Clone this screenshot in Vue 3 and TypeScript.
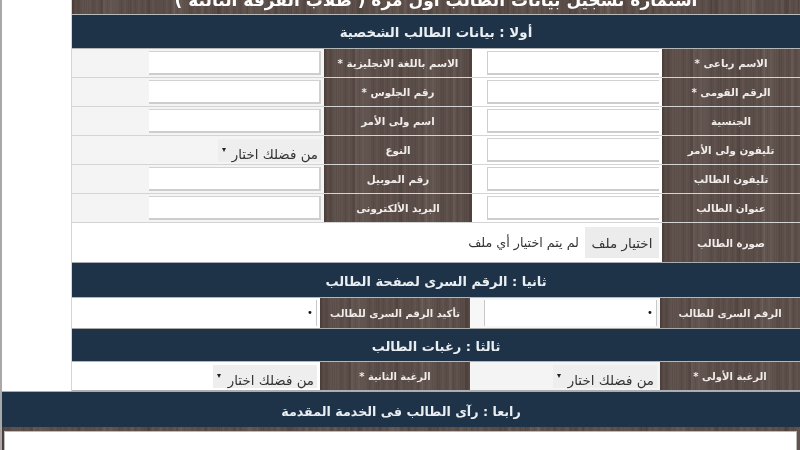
<script setup lang="ts">
interface Field { label: string; kind?: 'select' }
const rows: Field[][] = [
  [{ label: 'الاسم رباعى *' }, { label: 'الاسم باللغة الانجليزية *' }],
  [{ label: 'الرقم القومى *' }, { label: 'رقم الجلوس *' }],
  [{ label: 'الجنسية' }, { label: 'اسم ولى الأمر' }],
  [{ label: 'تليفون ولى الأمر' }, { label: 'النوع', kind: 'select' }],
  [{ label: 'تليفون الطالب' }, { label: 'رقم الموبيل' }],
  [{ label: 'عنوان الطالب' }, { label: 'البريد الألكترونى' }],
]
const placeholder = 'من فضلك اختار'
</script>

<template>
  <div class="page" dir="rtl">
    <div class="form">
      <div class="title wood"><span>استمارة تسجيل بيانات الطالب أول مرة ( طلاب الفرقة الثالثة )</span></div>

      <div class="band first">أولا : بيانات الطالب الشخصية</div>
      <div v-for="(row, i) in rows" :key="i" class="row personal">
        <template v-for="(f, j) in row" :key="j">
          <div class="label wood">{{ f.label }}</div>
          <div class="cell" :class="j === 1 ? 'grey' : ''">
            <div v-if="f.kind === 'select'" class="select">{{ placeholder }}<i class="arrow"></i></div>
            <div v-else class="input" :class="j === 1 ? 'edge-right' : 'edge-left'"></div>
          </div>
        </template>
      </div>
      <div class="row photo">
        <div class="label wood">صورة الطالب</div>
        <div class="file">
          <div class="file-btn">اختيار ملف</div>
          <span class="file-text">لم يتم اختيار أي ملف</span>
        </div>
      </div>

      <div class="band second">ثانيا : الرقم السرى لصفحة الطالب</div>
      <div class="row pair pass">
        <div class="label wood">الرقم السرى للطالب</div>
        <div class="cell narrow soft"><div class="pass-input">•</div></div>
        <div class="label wood">تأكيد الرقم السرى للطالب</div>
        <div class="cell"><div class="pass-input">•</div></div>
      </div>

      <div class="band third">ثالثا : رغبات الطالب</div>
      <div class="row pair wish">
        <div class="label wood">الرغبة الأولى *</div>
        <div class="cell grey narrow"><div class="select wide">{{ placeholder }}<i class="arrow"></i></div></div>
        <div class="label wood">الرغبة الثانية *</div>
        <div class="cell"><div class="select wide">{{ placeholder }}<i class="arrow"></i></div></div>
      </div>
    </div>

    <div class="band fourth">رابعا : رآى الطالب فى الخدمة المقدمة</div>
    <div class="opinion wood">
      <div class="textarea"></div>
    </div>
  </div>
</template>

<style scoped>
.page {
  position: relative;
  width: 800px;
  height: 450px;
  overflow: hidden;
  box-sizing: border-box;
  border-left: 2px solid #a9a9a9;
  background: #fff;
  font-family: "DejaVu Sans", "Liberation Sans", sans-serif;
  display: flex;
  flex-direction: column;
  filter: blur(0.5px);
}
.form {
  margin-left: 69px;
  border-left: 1px solid #d6d6d6;
}
.wood {
  background-color: #5b4d48;
  background-image:
    repeating-linear-gradient(90deg, rgba(30, 20, 18, 0.08) 0 1px, transparent 1px 3px, rgba(255, 255, 255, 0.03) 3px 5px, transparent 5px 7px),
    repeating-linear-gradient(90deg, rgba(25, 15, 12, 0.1) 0 2px, transparent 2px 13px, rgba(255, 255, 255, 0.04) 13px 16px, transparent 16px 29px),
    repeating-linear-gradient(90deg, rgba(25, 15, 12, 0.1) 0 7px, transparent 7px 31px, rgba(255, 255, 255, 0.04) 31px 43px, transparent 43px 71px);
}
.title {
  height: 14px;
  overflow: hidden;
  display: flex;
  align-items: flex-end;
  justify-content: center;
  border-bottom: 1px solid #b9bcbe;
  color: #fff;
  font-weight: 700;
  font-size: 17px;
}
.title span {
  white-space: nowrap;
  line-height: 30px;
  margin-bottom: -1px;
}
.band {
  box-sizing: border-box;
  padding-top: 3px;
  background: #1e3248;
  color: #e9eef2;
  font-weight: 700;
  font-size: 13px;
  display: flex;
  align-items: center;
  justify-content: center;
  border-bottom: 1px solid #b4b6b8;
}
.first { height: 34px; font-size: 13.4px; padding-top: 2px; }
.second { height: 36px; border-top: 1px solid #a9adb1; }
.third { height: 33px; }
.fourth { height: 36px; flex: none; border-top: 1px solid #a9adb1; border-bottom: 0; font-size: 12.7px; }
.row {
  display: grid;
  box-sizing: border-box;
  border-bottom: 1px solid #d4d4d4;
}
.personal {
  grid-template-columns: 138px 190px 148px 1fr;
  height: 29px;
}
.pair { grid-template-columns: 140px 190px 150px 1fr; }
.pair .label { font-size: 10px; }
.pass { height: 31px; border-bottom-color: #a9a9a9; }
.wish { height: 29px; border-bottom-color: #b0b0b0; }
.photo {
  grid-template-columns: 138px 1fr;
  height: 39px;
  border-bottom: 0;
}
.label {
  display: flex;
  align-items: center;
  justify-content: center;
  color: #f0ecea;
  font-size: 10.3px;
  font-weight: 700;
  white-space: nowrap;
}
.cell {
  display: flex;
  align-items: center;
  padding: 0 3px;
  background: #fff;
}
.grey { background: #f4f4f4; }
.soft { background: #f7f7f7; }
.cell.narrow { padding-left: 0; }
.input {
  box-sizing: border-box;
  width: 172px;
  height: 24px;
  background: #fff;
  border-top: 1px solid #d2d2d2;
  border-bottom: 2px solid #cdcdcd;
}
.edge-left { border-left: 1px solid #cdcdcd; }
.edge-right { border-right: 2px solid #d0d0d0; }
.select {
  position: relative;
  box-sizing: border-box;
  width: 103px;
  height: 23px;
  padding: 8px 3px 0 0;
  background: #eeeeee;
  color: #333;
  font-size: 13.4px;
  display: flex;
  align-items: center;
  white-space: nowrap;
}
.select.wide { width: 104px; }
.arrow {
  position: absolute;
  left: 4px;
  top: 9px;
  width: 0;
  height: 0;
  border-left: 2.5px solid transparent;
  border-right: 2.5px solid transparent;
  border-top: 4px solid #222;
}
.file {
  display: flex;
  align-items: center;
  padding-right: 3px;
}
.file-btn {
  width: 74px;
  height: 31px;
  background: #ececec;
  color: #333;
  font-size: 13.5px;
  display: flex;
  align-items: center;
  justify-content: center;
  white-space: nowrap;
}
.file-text {
  color: #333;
  font-size: 12.7px;
  white-space: nowrap;
  margin-right: 6px;
}
.pass-input {
  flex: 1;
  height: 26px;
  border-right: 1px solid #c8c8c8;
  border-left: 1px solid #c8c8c8;
  margin-left: 14px;
  padding-right: 3px;
  font-size: 10px;
  line-height: 26px;
  color: #111;
  background: #fff;
}
.cell:last-child .pass-input { margin-left: 0; border-left: 0; }
.opinion {
  flex: 1;
  padding: 4px 3px 0 2px;
}
.textarea {
  height: 100%;
  background: #fff;
  border: 1px solid #bbb;
  border-bottom: 0;
}
</style>
